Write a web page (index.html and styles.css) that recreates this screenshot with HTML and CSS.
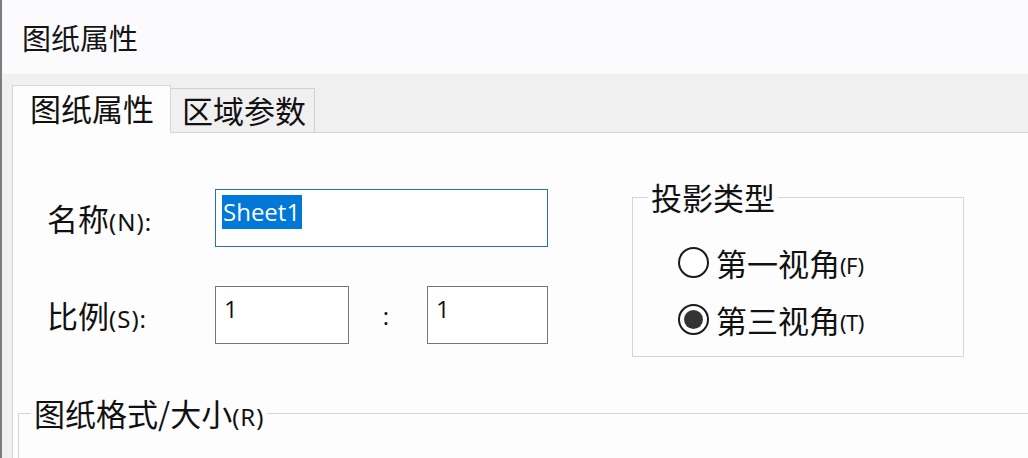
FILE: index.html
```html
<!DOCTYPE html>
<html lang="zh-CN">
<head>
<meta charset="utf-8">
<title>图纸属性</title>
<link rel="stylesheet" href="styles.css">
</head>
<body>
<div class="window">
  <div class="titlebar">图纸属性</div>
  <div class="client">
    <div class="tabs">
      <div class="tab active">图纸属性</div>
      <div class="tab">区域参数</div>
    </div>
    <div class="panel">
      <div class="top">
        <div class="form">
          <div class="row">
            <label class="lbl">名称<span class="key">(N):</span></label>
            <div class="input name focus"><span class="sel">Sheet1</span></div>
          </div>
          <div class="row">
            <label class="lbl">比例<span class="key">(S):</span></label>
            <div class="input scale-a">1</div>
            <span class="colon">:</span>
            <div class="input scale-b">1</div>
          </div>
        </div>
        <fieldset class="group proj">
          <legend>投影类型</legend>
          <div class="radios">
            <div class="radio"><span class="circle"></span>第一视角<span class="key small">(F)</span></div>
            <div class="radio checked"><span class="circle"></span>第三视角<span class="key small">(T)</span></div>
          </div>
        </fieldset>
      </div>
      <fieldset class="group format">
        <legend>图纸格式/大小<span class="key">(R)</span></legend>
      </fieldset>
    </div>
  </div>
</div>
</body>
</html>
```
FILE: styles.css
```css
html, body {
  margin: 0;
  padding: 0;
}
body {
  width: 1028px;
  height: 458px;
  overflow: hidden;
  background: #fbfbfd;
  font-family: "Noto Sans CJK SC", "Noto Sans", sans-serif;
  color: #111;
}
.window {
  box-sizing: border-box;
  height: 458px;
  border-left: 2px solid #7c7c7c;
  display: flex;
  flex-direction: column;
}
.titlebar {
  height: 74px;
  flex: none;
  line-height: 74px;
  padding-left: 20px;
  font-size: 29px;
  background: #fbfbfd;
  color: #151515;
}
.client {
  flex: 1;
  min-height: 0;
  background: #f0f0f0;
  padding-left: 10px;
  display: flex;
  flex-direction: column;
}
.tabs {
  height: 58px;
  flex: none;
  display: flex;
  align-items: flex-end;
}
.tab {
  box-sizing: border-box;
  height: 44px;
  width: 144px;
  padding-left: 11px;
  font-size: 31px;
  line-height: 42px;
  background: #f0f0f0;
  border: 1px solid #d2d2d2;
  border-bottom: none;
  border-left: none;
  white-space: nowrap;
}
.tab.active {
  position: relative;
  z-index: 1;
  height: 48px;
  width: 159px;
  margin-bottom: -1px;
  padding-left: 17px;
  line-height: 44px;
  background: #fdfdfe;
  border: 1px solid #d6d6d6;
  border-bottom: none;
}
.panel {
  flex: 1;
  min-height: 0;
  background: #fdfdfe;
  border-top: 1px solid #d6d6d6;
  border-left: 1px solid #d6d6d6;
  display: flex;
  flex-direction: column;
}
.top {
  display: flex;
  align-items: flex-start;
  flex: none;
}
.form {
  margin-top: 56px;
  padding-left: 34px;
  display: flex;
  flex-direction: column;
  gap: 39px;
}
.row {
  display: flex;
  align-items: center;
  height: 58px;
}
.lbl {
  width: 168px;
  font-size: 31px;
  line-height: 40px;
  white-space: nowrap;
}
.key {
  font-family: "Noto Sans", "Open Sans", sans-serif;
  font-size: 24px;
  line-height: 20px;
  letter-spacing: 1px;
}
.key.small {
  font-size: 22px;
  letter-spacing: -0.5px;
}
.input {
  box-sizing: border-box;
  height: 58px;
  border: 1px solid #767676;
  background: #fff;
  padding: 5px 0 0 6px;
  font-family: "Open Sans", "Noto Sans", sans-serif;
  font-size: 24px;
  line-height: 34px;
  color: #111;
}
.input.name {
  width: 333px;
}
.input.focus {
  border-color: #2a6fb4;
}
.sel {
  display: inline-block;
  background: #0078d7;
  color: #fff;
  padding: 0 2px 0 1px;
}
.input.scale-a {
  width: 134px;
  padding-left: 8px;
}
.input.scale-b {
  width: 121px;
  padding-left: 8px;
}
.colon {
  width: 74px;
  text-align: center;
  font-family: "Open Sans", sans-serif;
  font-size: 24px;
  margin-right: 4px;
}
.group {
  margin: 0;
  padding: 0;
  min-width: 0;
  box-sizing: border-box;
  border: 1px solid #d5d5d5;
}
.group legend {
  font-size: 31px;
  line-height: 32px;
  height: 32px;
  padding: 0 3px;
  margin-left: 15px;
  white-space: nowrap;
}
.proj {
  margin-top: 48px;
  margin-left: 84px;
  width: 332px;
}
.radios {
  padding: 29px 0 17px 45px;
  display: flex;
  flex-direction: column;
  gap: 17px;
}
.radio {
  display: flex;
  align-items: center;
  height: 40px;
  font-size: 31px;
  white-space: nowrap;
}
.radio .key {
  margin-top: 6px;
}
.circle {
  box-sizing: border-box;
  width: 31px;
  height: 31px;
  border: 2px solid #1a1a1a;
  border-radius: 50%;
  background: #fff;
  margin-right: 7px;
  display: flex;
  align-items: center;
  justify-content: center;
}
.radio.checked .circle::after {
  content: "";
  width: 19px;
  height: 19px;
  border-radius: 50%;
  background: #333;
}
.format {
  flex: 1;
  min-height: 0;
  margin-top: 40px;
  margin-left: 5px;
  border-right: none;
  border-bottom: none;
}
.format legend {
  margin-left: 12px;
}
```
